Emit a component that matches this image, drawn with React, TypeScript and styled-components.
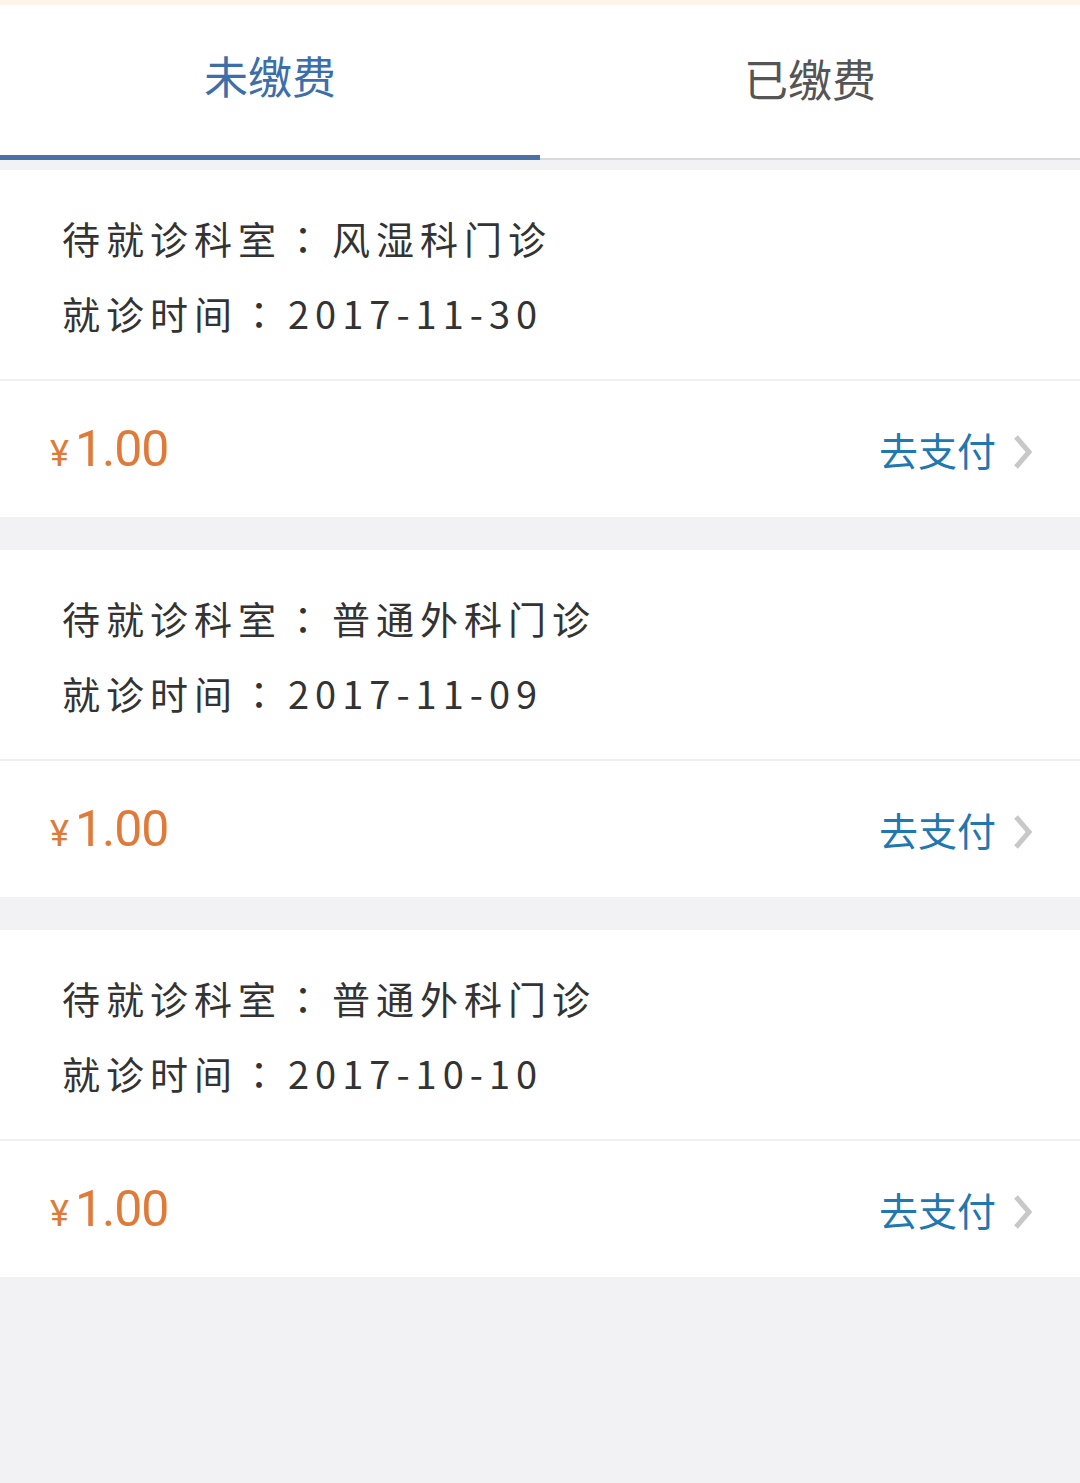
import React from "react";
import styled, { createGlobalStyle } from "styled-components";

const Global = createGlobalStyle`
  html, body { margin: 0; padding: 0; background: #f2f2f4; }
  body { font-family: "Noto Sans CJK SC", "Noto Sans", sans-serif; }
  * { box-sizing: border-box; }
`;

const Page = styled.div`
  width: 1080px;
  min-height: 1483px;
  background: #f2f2f4;
  display: flex;
  flex-direction: column;
`;

const TopStrip = styled.div`
  height: 5px;
  background: #fdf4ea;
`;

const Tabs = styled.div`
  display: flex;
  background: #ffffff;
  height: 155px;
`;

const Tab = styled.div<{ $active?: boolean }>`
  flex: 1;
  display: flex;
  align-items: center;
  justify-content: center;
  padding-bottom: 10px;
  font-size: 44px;
  color: ${(p) => (p.$active ? "#3c6faa" : "#555555")};
  border-bottom: ${(p) => (p.$active ? "5px solid #4a72a6" : "2px solid #d9d9d9")};
  margin-top: ${(p) => (p.$active ? "0" : "3px")};
`;

const List = styled.div`
  display: flex;
  flex-direction: column;
  gap: 33px;
  padding-top: 10px;
`;

const Card = styled.div`
  background: #ffffff;
  display: flex;
  flex-direction: column;
`;

const Info = styled.div`
  height: 211px;
  padding: 40px 0 0 62px;
  display: flex;
  flex-direction: column;
  gap: 19px;
  border-bottom: 2px solid #efefef;
`;

const Line = styled.div`
  font-size: 38px;
  line-height: 56px;
  letter-spacing: 6px;
  color: #333333;
  white-space: nowrap;
`;

const Colon = styled.span`
  font-family: "Noto Sans CJK TC", "Noto Sans CJK SC", sans-serif;
  margin: 0 4px 0 2px;
`;

const PayRow = styled.div`
  height: 136px;
  display: flex;
  align-items: center;
  justify-content: space-between;
  padding: 0 46px 0 50px;
`;

const Price = styled.div`
  color: #e07a38;
  font-family: Roboto, "Noto Sans", sans-serif;
  display: flex;
  align-items: baseline;
`;

const Yen = styled.span`
  font-size: 36px;
  margin-right: 6px;
`;

const Amount = styled.span`
  font-size: 50px;
  letter-spacing: -1px;
`;

const PayLink = styled.div`
  display: flex;
  align-items: center;
  gap: 16px;
  color: #1f78b0;
  font-size: 39px;
`;

const Chevron = styled.svg`
  width: 22px;
  height: 38px;
  margin-top: 6px;
`;

const items = [
  { dept: "风湿科门诊", date: "2017-11-30" },
  { dept: "普通外科门诊", date: "2017-11-09" },
  { dept: "普通外科门诊", date: "2017-10-10" },
];

export default function App() {
  return (
    <Page>
      <Global />
      <TopStrip />
      <Tabs>
        <Tab $active>未缴费</Tab>
        <Tab>已缴费</Tab>
      </Tabs>
      <List>
        {items.map((it, i) => (
          <Card key={i}>
            <Info>
              <Line>
                待就诊科室<Colon>：</Colon>{it.dept}
              </Line>
              <Line>
                就诊时间<Colon>：</Colon>{it.date}
              </Line>
            </Info>
            <PayRow>
              <Price>
                <Yen>¥</Yen>
                <Amount>1.00</Amount>
              </Price>
              <PayLink>
                去支付
                <Chevron viewBox="0 0 22 38">
                  <path d="M4 4 L17 19 L4 34" fill="none" stroke="#c8c8c8" strokeWidth="5" strokeLinejoin="miter" />
                </Chevron>
              </PayLink>
            </PayRow>
          </Card>
        ))}
      </List>
    </Page>
  );
}
